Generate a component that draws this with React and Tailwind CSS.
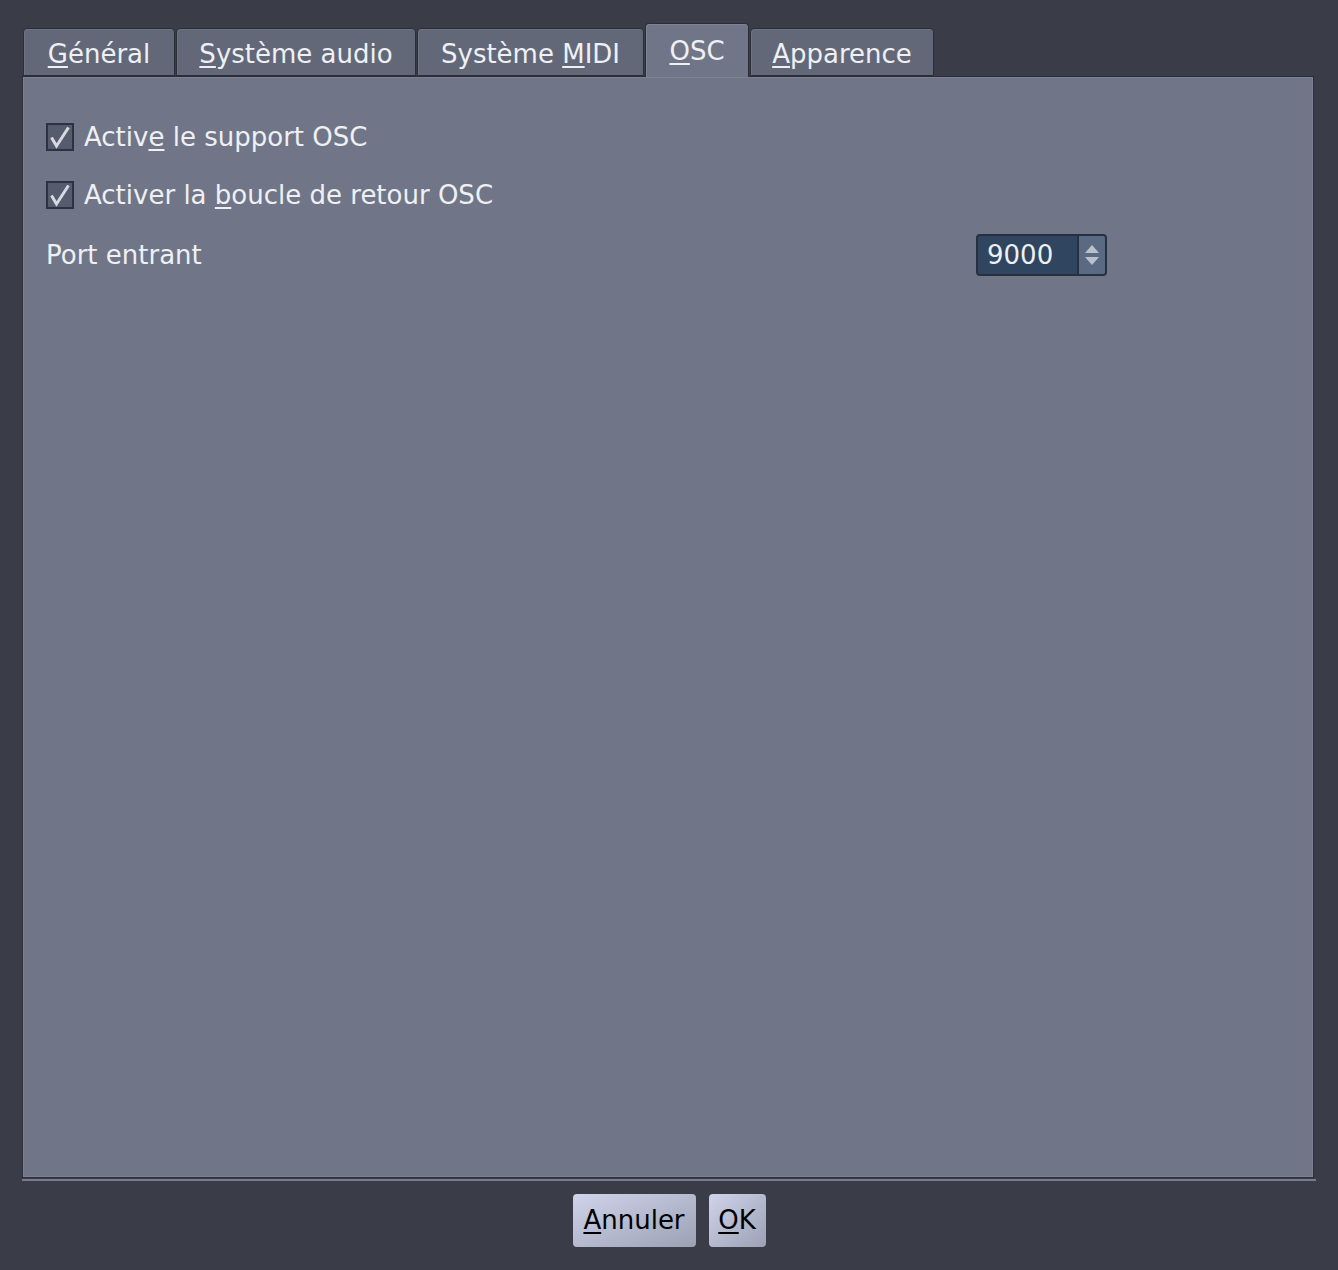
import React, { useState } from "react";

const tabs = [
  { id: "general", pre: "", key: "G", post: "énéral", w: "w-[152px]" },
  { id: "audio", pre: "", key: "S", post: "ystème audio", w: "w-[240px]" },
  { id: "midi", pre: "Système ", key: "M", post: "IDI", w: "w-[227px]" },
  { id: "osc", pre: "", key: "O", post: "SC", w: "w-[104px]" },
  { id: "look", pre: "", key: "A", post: "pparence", w: "w-[184px]" },
];

function Mnemonic({ pre, k, post }) {
  return (
    <span>
      {pre}
      <span className="underline decoration-2 underline-offset-[3px]">{k}</span>
      {post}
    </span>
  );
}

function CheckRow({ checked, onToggle, pre, k, post }) {
  return (
    <label className="flex items-center gap-[10px] h-[28px] cursor-default" onClick={onToggle}>
      <span className="w-[28px] h-[28px] border-2 border-[#2e3140] bg-[#565b6e] flex">
        {checked && (
          <svg width="24" height="24" viewBox="0 0 24 24">
            <path d="M3.5 12.5 L8.5 21 L20.5 2.5" fill="none" stroke="#d6d9df" strokeWidth="3" strokeLinejoin="miter" />
          </svg>
        )}
      </span>
      <Mnemonic pre={pre} k={k} post={post} />
    </label>
  );
}

export default function App() {
  const [tab, setTab] = useState("osc");
  const [osc, setOsc] = useState(true);
  const [loop, setLoop] = useState(true);
  const [port, setPort] = useState(9000);

  return (
    <div
      className="w-[1338px] h-[1270px] bg-[#3a3d48] text-[26px] text-[#eef0f4] pt-[23px] px-[22px]"
      style={{ fontFamily: '"DejaVu Sans", Verdana, sans-serif' }}
    >
      <div className="flex items-end gap-px pl-px h-[53px] relative z-10">
        {tabs.map((t) => {
          const active = t.id === tab;
          return (
            <button
              key={t.id}
              type="button"
              onClick={() => setTab(t.id)}
              className={
                active
                  ? `${t.w} h-[54px] -mb-px bg-[#707687] border border-b-0 border-[#2b2e36] rounded-t-[4px] flex items-start justify-center pt-[8px] shadow-[inset_1px_1px_0_#7e8496]`
                  : `${t.w} h-[48px] bg-[#636878] border border-[#2b2e36] rounded-t-[4px] flex items-start justify-center pt-[6px] shadow-[inset_1px_1px_0_#6f7485]`
              }
            >
              <Mnemonic pre={t.pre} k={t.key} post={t.post} />
            </button>
          );
        })}
      </div>

      <div className="w-[1292px] h-[1102px] bg-[#707687] border border-[#2b2e36] shadow-[inset_1px_1px_0_#7c8294,inset_-1px_-1px_0_#7c8294] pt-[46px] pl-[23px]">
        <div className="flex flex-col gap-[30px]">
          <CheckRow checked={osc} onToggle={() => setOsc(!osc)} pre="Activ" k="e" post=" le support OSC" />
          <CheckRow checked={loop} onToggle={() => setLoop(!loop)} pre="Activer la " k="b" post="oucle de retour OSC" />
        </div>
        <div className="flex items-center mt-[25px]">
          <span className="w-[930px]">Port entrant</span>
          <div className="w-[131px] h-[42px] bg-[#30455f] border-2 border-[#26303f] rounded-[4px] flex overflow-hidden">
            <span className="flex-1 pl-[9px] flex items-center">{port}</span>
            <div className="w-[28px] bg-[#5a6a82] border-l-2 border-[#26303f] flex flex-col">
              <button type="button" onClick={() => setPort(port + 1)} className="flex-1 flex items-end justify-center pb-[2px]">
                <svg width="16" height="9" viewBox="0 0 16 9">
                  <path d="M1 9 L8 1 L15 9 Z" fill="#b9c1cd" />
                </svg>
              </button>
              <button type="button" onClick={() => setPort(port - 1)} className="flex-1 flex items-start justify-center pt-[2px]">
                <svg width="16" height="9" viewBox="0 0 16 9">
                  <path d="M1 0 L8 8 L15 0 Z" fill="#b9c1cd" />
                </svg>
              </button>
            </div>
          </div>
        </div>
      </div>

      <div className="w-[1294px] h-[2px] bg-[#777c8c] mt-[1px]" />

      <div className="flex justify-center gap-[13px] mt-[13px] text-black">
        <button
          type="button"
          className="w-[123px] h-[53px] rounded-[4px] bg-gradient-to-br from-[#cfd4ec] to-[#9da1b4] flex items-center justify-center"
        >
          <Mnemonic pre="" k="A" post="nnuler" />
        </button>
        <button
          type="button"
          className="w-[57px] h-[53px] rounded-[4px] bg-gradient-to-br from-[#cfd4ec] to-[#9da1b4] flex items-center justify-center"
        >
          <Mnemonic pre="" k="O" post="K" />
        </button>
      </div>
    </div>
  );
}
